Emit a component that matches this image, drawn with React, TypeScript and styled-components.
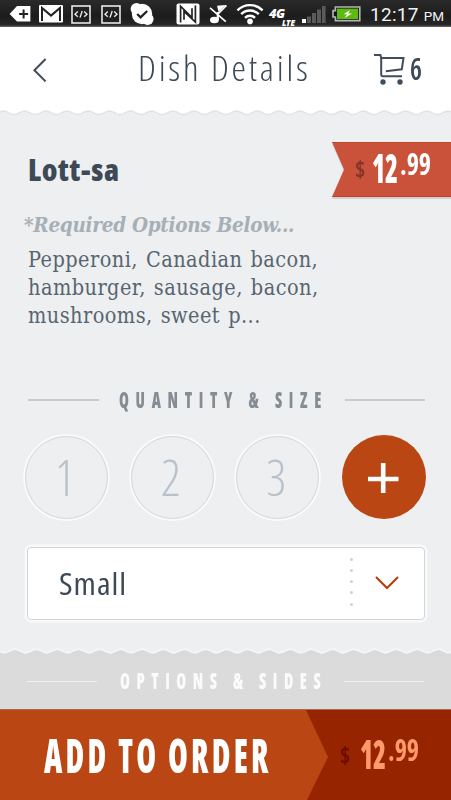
import React from 'react';
import styled, { createGlobalStyle } from 'styled-components';

const sans = '"Open Sans", "Noto Sans", sans-serif';
const serif = '"DejaVu Serif Condensed", "DejaVu Serif", serif';

const GlobalStyle = createGlobalStyle`
  * { box-sizing: border-box; }
  body { margin: 0; background: #eeeff1; }
  svg { display: block; flex: none; }
  button { border: 0; padding: 0; margin: 0; background: none; font: inherit; color: inherit; }
`;

const Screen = styled.div`
  width: 451px;
  height: 800px;
  overflow: hidden;
  display: flex;
  flex-direction: column;
  background: #eeeff1;
  font-family: ${sans};
  color: #3d4a55;
`;

/* Text drawn narrower than the font's condensed cut; $w is the box it fills. */
const Narrow = styled.span<{
  $size: number;
  $w: number;
  $weight?: number;
  $scale?: number;
  $track?: number;
  $color?: string;
  $top?: number;
}>`
  display: block;
  flex: none;
  width: ${p => p.$w}px;
  margin-top: ${p => p.$top ?? 0}px;
  white-space: nowrap;
  font-family: ${sans};
  font-stretch: 75%;
  font-size: ${p => p.$size}px;
  line-height: ${p => p.$size}px;
  font-weight: ${p => p.$weight ?? 400};
  letter-spacing: ${p => p.$track ?? 0}px;
  color: ${p => p.$color ?? 'inherit'};
  transform: scaleX(${p => p.$scale ?? 1});
  transform-origin: 0 50%;
`;

/* ---------- status bar ---------- */

const StatusBar = styled.div`
  height: 27px;
  flex: none;
  display: flex;
  align-items: flex-start;
  background: linear-gradient(#2a2a2a, #1c1c1c 60%, #272727 92%, #6a6a6a);
  color: #fff;
`;

const Slot = styled.div<{ $gap: number; $top?: number }>`
  flex: none;
  margin-left: ${p => p.$gap}px;
  margin-top: ${p => p.$top ?? 0}px;
`;

const Network = styled.div`
  width: 26px;
  display: flex;
  flex-direction: column;
  font-family: "Open Sans", sans-serif;
  font-weight: 800;
  font-style: italic;
`;
const NetworkGen = styled.span`
  font-size: 13px;
  line-height: 10px;
  letter-spacing: -0.6px;
`;
const NetworkKind = styled.span`
  align-self: flex-end;
  font-size: 8px;
  line-height: 10px;
`;

const Clock = styled.div`
  display: flex;
  align-items: baseline;
  gap: 5px;
  margin: 3px 0 0 9px;
  font-family: Roboto, sans-serif;
  font-size: 19px;
  line-height: 23px;
  letter-spacing: 0.3px;
  color: #f2f2f2;
`;
const Meridiem = styled.span`
  font-size: 13.5px;
  letter-spacing: 0;
`;

const CodeIcon = () => (
  <svg width="20" height="19" viewBox="0 0 20 19" fill="none" stroke="#e8e8e8">
    <rect x="1" y="1" width="18" height="17" strokeWidth="1.6" />
    <path d="M6.8 6.6 4 9.2l2.8 2.6M13.2 6.6 16 9.2l-2.8 2.6M11.2 6 9 12.6" strokeWidth="1.4" />
  </svg>
);

const Status = () => (
  <StatusBar>
    <Slot $gap={9} $top={6}>
      <svg width="22" height="16" viewBox="0 0 22 16">
        <path d="M8 0h13.4v15.6H8L.6 8z" fill="#fff" />
        <path d="M14.6 3.4v9M10.1 7.9h9" stroke="#222" strokeWidth="2" />
      </svg>
    </Slot>
    <Slot $gap={8} $top={5}>
      <svg width="24" height="18" viewBox="0 0 24 18">
        <rect width="24" height="17.5" rx="1" fill="#fff" />
        <path d="M3 16V3l9 7.6L21 3v13" fill="none" stroke="#222" strokeWidth="2" />
      </svg>
    </Slot>
    <Slot $gap={8} $top={5}><CodeIcon /></Slot>
    <Slot $gap={10} $top={5}><CodeIcon /></Slot>
    <Slot $gap={9} $top={3}>
      <svg width="24" height="22" viewBox="0 0 24 22">
        <circle cx="12" cy="11" r="10.2" fill="#fff" />
        <circle cx="6.6" cy="6" r="6" fill="#fff" />
        <circle cx="17.6" cy="16" r="6" fill="#fff" />
        <path d="m7.2 11 3.4 3.4L17.2 8" fill="none" stroke="#222" strokeWidth="2.3" />
      </svg>
    </Slot>
    <Slot $gap={22} $top={3}>
      <svg width="24" height="22" viewBox="0 0 24 22">
        <rect x="0.5" y="0.4" width="23" height="21.2" rx="2" fill="#fff" />
        <path d="M4.6 19.6V3.2L16 14.6V5.2M8 16.8V8.4L19.4 19V2.4" fill="none" stroke="#222" strokeWidth="1.7" />
      </svg>
    </Slot>
    <Slot $gap={9} $top={4}>
      <svg width="20" height="20" viewBox="0 0 20 20" fill="none" stroke="#fff">
        <ellipse cx="5.4" cy="16" rx="4.4" ry="3.2" fill="#fff" stroke="none" />
        <path d="M8.8 16V8" strokeWidth="2.2" />
        <path d="M8 .8 16.6 0 9.6 7z" transform="translate(0 1)" fill="#fff" stroke="none" />
        <path d="M1 3.8 16.8 17.6M17.4 1.4 9 10" strokeWidth="1.7" />
      </svg>
    </Slot>
    <Slot $gap={7} $top={3}>
      <svg width="28" height="22" viewBox="0 0 28 22" fill="none" stroke="#fff" strokeWidth="2.4">
        <path d="M1.4 7.4a17.6 17.6 0 0 1 25.2 0M5.2 11.2a12.4 12.4 0 0 1 17.6 0M9 14.9a7 7 0 0 1 10 0" />
        <circle cx="14" cy="18.4" r="2.8" fill="#fff" stroke="none" />
      </svg>
    </Slot>
    <Slot $gap={5} $top={8}>
      <Network>
        <NetworkGen>4G</NetworkGen>
        <NetworkKind>LTE</NetworkKind>
      </Network>
    </Slot>
    <Slot $gap={7} $top={6}>
      <svg width="24" height="17" viewBox="0 0 24 17" fill="#5a5a5a">
        <rect x="0" y="13" width="4" height="4" fill="#fff" />
        <rect x="5" y="10.5" width="4" height="6.5" />
        <rect x="10" y="7" width="4" height="10" />
        <rect x="15" y="3.5" width="4" height="13.5" />
        <rect x="20" y="0" width="3.6" height="17" />
      </svg>
    </Slot>
    <Slot $gap={6} $top={6}>
      <svg width="29" height="16" viewBox="0 0 29 16">
        <path d="M3.4 1h24.4v13.6H3.4V11H1V4.6h2.4z" fill="#151515" stroke="#b5b5b5" strokeWidth="1.6" />
        <rect x="5" y="2.6" width="21.2" height="10.4" fill="#5dbb10" />
        <path d="m18 4-6.4 4.2h3.6L12.6 12l7.4-4.6h-3.8z" fill="#fff" />
      </svg>
    </Slot>
    <Clock>
      12:17 <Meridiem>PM</Meridiem>
    </Clock>
  </StatusBar>
);

/* ---------- scalloped edge ---------- */

const PERIOD = 21.17;
const wave = (crest: number, mid: number, amp: number) => {
  const points: string[] = [];
  for (let x = -1; x <= 452; x += 1) {
    const y = mid - amp * Math.cos((2 * Math.PI * (x - crest)) / PERIOD);
    points.push(`${x} ${y.toFixed(2)}`);
  }
  return `M${points.join('L')}`;
};

interface ScallopProps {
  crest: number;
  above: string;
  below: string;
  edge: string;
  edgeOffset: number;
}
const Scallop = ({ crest, above, below, edge, edgeOffset }: ScallopProps) => (
  <svg width="451" height="10" viewBox="0 0 451 10">
    <rect width="451" height="10" fill={above} />
    <path d={`${wave(crest, 5, 1.7)}V10H-1z`} fill={below} />
    <path d={wave(crest, 5 + edgeOffset, 1.7)} fill="none" stroke={edge} strokeWidth="1.5" />
  </svg>
);

/* ---------- header ---------- */

const Header = styled.header`
  height: 81px;
  flex: none;
  display: flex;
  align-items: flex-start;
  background: #fff;
`;
const BackButton = styled.button`
  margin: 31px 0 0 32px;
`;
const Title = styled.h1`
  margin: 23px 0 0 91px;
  font-weight: inherit;
`;
const CartButton = styled.button`
  display: flex;
  align-items: flex-start;
  gap: 4px;
  margin: 26px 0 0 61px;
  text-align: left;
`;

/* ---------- dish ---------- */

const Dish = styled.section`
  height: 256px;
  flex: none;
  padding-top: 24px;
`;
const DishTop = styled.div`
  display: flex;
  justify-content: space-between;
  align-items: flex-start;
  height: 60px;
  padding-left: 28px;
`;
const DishName = styled.h2`
  margin: 12px 0 0;
`;
const RibbonShadow = styled.div`
  filter: drop-shadow(0 2.5px 0 #ced0d2);
`;
const Ribbon = styled.div`
  width: 119px;
  height: 55px;
  display: flex;
  align-items: flex-start;
  padding-left: 23px;
  background: #cb523a;
  border-top: 1px solid #c2452a;
  border-bottom: 1px solid #c2401f;
  clip-path: polygon(0 0, 100% 0, 100% 100%, 0 100%, 12px 50%);
`;
const Required = styled.p`
  margin: 9px 0 0 24px;
  font-family: ${serif};
  font-style: italic;
  font-weight: 700;
  font-size: 20.5px;
  line-height: 28px;
  letter-spacing: -0.28px;
  white-space: nowrap;
  color: #a7afb6;
`;
const Description = styled.p`
  margin: 7px 0 0 28px;
  width: 330px;
  font-family: ${serif};
  font-size: 21.5px;
  line-height: 28px;
  letter-spacing: 0.45px;
  word-spacing: 1.5px;
  color: #57656f;
`;

const Price = ({ color, currency, top, gap }: { color: string; currency: string; top: number; gap: number }) => (
  <>
    <Narrow $size={23} $w={gap} $weight={700} $scale={0.95} $color={currency} $top={top + 10}>$</Narrow>
    <Narrow $size={40} $w={27.5} $weight={800} $scale={0.66} $color={color} $top={top}>12</Narrow>
    <Narrow $size={31} $w={31} $weight={700} $scale={0.84} $color={color} $top={top}>.99</Narrow>
  </>
);

/* ---------- section headings ---------- */

const Heading = styled.div<{ $h: number; $left: number }>`
  height: ${p => p.$h}px;
  flex: none;
  display: flex;
  align-items: center;
  padding-left: ${p => p.$left}px;
`;
const Rule = styled.span<{ $w: number; $h: number; $color: string; $gap: number }>`
  width: ${p => p.$w}px;
  height: ${p => p.$h}px;
  margin-right: ${p => p.$gap}px;
  background: ${p => p.$color};
`;

/* ---------- quantity ---------- */

const Quantities = styled.div`
  height: 90px;
  flex: none;
  display: flex;
  justify-content: space-between;
  align-items: center;
  padding: 0 25px;
  margin-top: 6px;
`;
const Quantity = styled.button`
  width: 83px;
  height: 83px;
  display: flex;
  align-items: center;
  justify-content: center;
  text-align: left;
  border-radius: 50%;
  border: 1.5px solid #d5d7d8;
  box-shadow: 0 0 0 2px #f9fafa;
  color: #b8c2ca;
`;
const AddQuantity = styled(Quantity)`
  width: 84px;
  height: 84px;
  border: 0;
  box-shadow: none;
  background: #b94613;
`;

const Select = styled.div`
  height: 73px;
  flex: none;
  display: flex;
  align-items: center;
  margin: 25px 26px 0 27px;
  padding-left: 31px;
  background: #fff;
  border: 1px solid #d3d5d6;
  border-radius: 4px;
  box-shadow: 0 0 0 2.5px #f8f9f9;
`;
const Dots = styled.div`
  width: 3px;
  margin: -4px 0 0 223px;
  display: flex;
  flex-direction: column;
  gap: 8.25px;
`;
const Dot = styled.i`
  height: 3px;
  border-radius: 50%;
  background: #cfd1d3;
`;
const Chevron = styled.div`
  margin: -1px 0 0 22px;
`;

const Spacer = styled.div`
  height: 27px;
  flex: none;
`;

const Options = styled.section`
  height: 52px;
  flex: none;
  background: #dbdbdb;
`;

/* ---------- order bar ---------- */

const OrderBar = styled.button`
  height: 91px;
  flex: none;
  display: flex;
  text-align: left;
  align-items: stretch;
  background: #972400;
  border-top: 1px solid #a26a52;
`;
const OrderLabel = styled.span`
  width: 328px;
  padding: 22px 0 0 43.5px;
  background: #b94613;
  clip-path: polygon(0 0, 306px 0, 328px 47px, 307px 100%, 0 100%);
`;
const OrderPrice = styled.span`
  display: flex;
  align-items: flex-start;
  padding-left: 12px;
`;

export default function App() {
  return (
    <Screen>
      <GlobalStyle />
      <Status />
      <Header>
        <BackButton aria-label="Back">
          <svg width="15" height="24" viewBox="0 0 15 24" fill="none" stroke="#414d58" strokeWidth="2">
            <path d="M13.6 1 2.4 12.2 13.6 23.4" />
          </svg>
        </BackButton>
        <Title>
          <Narrow $size={35.5} $w={174} $weight={350} $track={2.7} $scale={1.03}>Dish Details</Narrow>
        </Title>
        <CartButton aria-label="Cart">
          <svg width="33" height="32" viewBox="0 0 33 32" fill="none" stroke="#414d58" strokeWidth="2">
            <path d="M1 2h6.4l.8 3v16.8q0 1.4 1.4 1.4H29M8.2 5h22.3l-1.7 11.3-16 2" />
            <circle cx="10" cy="29" r="2.7" fill="#414d58" stroke="none" />
            <circle cx="27" cy="29" r="2.7" fill="#414d58" stroke="none" />
          </svg>
          <Narrow $size={31} $w={12} $weight={600} $scale={0.86}>6</Narrow>
        </CartButton>
      </Header>
      <Scallop crest={3.5} above="#ffffff" below="#eeeff1" edge="#e2e3e5" edgeOffset={-0.2} />

      <Dish>
        <DishTop>
          <DishName>
            <Narrow $size={30.5} $w={92} $weight={800} $track={0.6}>Lott-sa</Narrow>
          </DishName>
          <RibbonShadow>
            <Ribbon>
              <Price color="#fff" currency="#85352a" top={5} gap={17} />
            </Ribbon>
          </RibbonShadow>
        </DishTop>
        <Required>*Required Options Below...</Required>
        <Description>
          Pepperoni, Canadian bacon, hamburger, sausage, bacon, mushrooms, sweet p...
        </Description>
      </Dish>

      <Heading $h={52} $left={28}>
        <Rule $w={71} $h={2} $color="#c9cbcd" $gap={20} />
        <Narrow $size={23.5} $w={226} $weight={800} $scale={0.68} $track={9.8} $color="#868d92">QUANTITY &amp; SIZE</Narrow>
        <Rule $w={80} $h={2} $color="#c9cbcd" $gap={0} />
      </Heading>

      <Quantities>
        {[1, 2, 3].map(n => (
          <Quantity key={n}>
            <Narrow $size={49} $w={23} $weight={300}>{n}</Narrow>
          </Quantity>
        ))}
        <AddQuantity aria-label="Increase quantity">
          <svg width="32" height="32" viewBox="0 0 32 32" stroke="#fff" strokeWidth="4.6">
            <path d="M15.2 2v32M0 18h30.5" />
          </svg>
        </AddQuantity>
      </Quantities>

      <Select>
        <Narrow $size={31} $w={68} $weight={400} $track={0.9} $scale={1.07}>Small</Narrow>
        <Dots>
          {[0, 1, 2, 3, 4].map(n => <Dot key={n} />)}
        </Dots>
        <Chevron>
          <svg width="24" height="14" viewBox="0 0 24 14" fill="none" stroke="#b83a0b" strokeWidth="2">
            <path d="M1 1 12 12 23 1" />
          </svg>
        </Chevron>
      </Select>
      <Spacer />

      <Scallop crest={15} above="#eeeff1" below="#d9dada" edge="#f5f6f7" edgeOffset={-1.2} />
      <Options>
        <Heading $h={48} $left={27}>
          <Rule $w={70} $h={1} $color="#f1f1f1" $gap={23} />
          <Narrow $size={23.5} $w={224} $weight={800} $scale={0.68} $track={9.6} $color="#fbfbfb">OPTIONS &amp; SIDES</Narrow>
          <Rule $w={80} $h={1} $color="#f1f1f1" $gap={0} />
        </Heading>
      </Options>

      <OrderBar>
        <OrderLabel>
          <Narrow $size={47} $w={228} $weight={800} $scale={0.68} $track={4.7} $color="#fff">ADD TO ORDER</Narrow>
        </OrderLabel>
        <OrderPrice>
          <Price color="#ff9a6a" currency="#6f0a00" top={24} gap={20} />
        </OrderPrice>
      </OrderBar>
    </Screen>
  );
}
